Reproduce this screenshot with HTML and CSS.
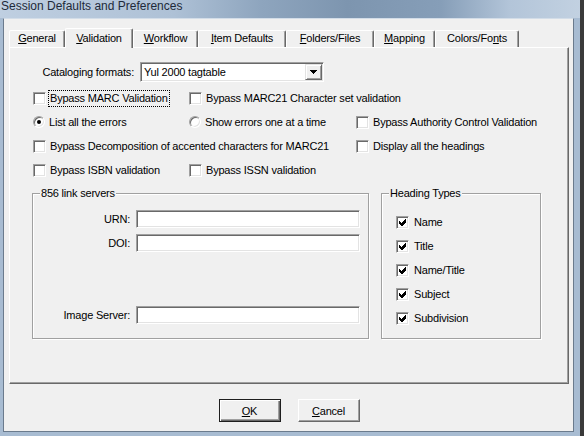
FILE: index.html
```html
<!DOCTYPE html>
<html lang="en">
<head>
    <meta charset="UTF-8">
    <title>Session Defaults and Preferences</title>
    <link rel="stylesheet" href="styles.css">
</head>
<body>
    <div class="window">
        <div class="titlebar">Session Defaults and Preferences</div>

        <div class="client">
            <div class="tabs">
                <div class="tab"><u>G</u>eneral</div>
                <div class="tab active"><u>V</u>alidation</div>
                <div class="tab"><u>W</u>orkflow</div>
                <div class="tab"><u>I</u>tem Defaults</div>
                <div class="tab"><u>F</u>olders/Files</div>
                <div class="tab"><u>M</u>apping</div>
                <div class="tab">Colors/Fo<u>n</u>ts</div>
            </div>

            <div class="pane">
                <div class="format-row">
                    <span class="format-label">Cataloging formats:</span>
                    <div class="combo">
                        <span class="combo-text">Yul 2000 tagtable</span>
                        <span class="combo-btn">
                            <svg width="7" height="4" viewBox="0 0 7 4" shape-rendering="crispEdges"><polygon points="0,0 7,0 4,4 3,4"/></svg>
                        </span>
                    </div>
                </div>

                <div class="options">
                    <label class="opt"><span class="check"></span><span class="focus">Bypass MARC Validation</span></label>
                    <label class="opt wide"><span class="check"></span>Bypass MARC21 Character set validation</label>

                    <label class="opt"><span class="radio on"></span>List all the errors</label>
                    <label class="opt"><span class="radio"></span>Show errors one at a time</label>
                    <label class="opt"><span class="check"></span>Bypass Authority Control Validation</label>

                    <label class="opt wide"><span class="check"></span>Bypass Decomposition of accented characters for MARC21</label>
                    <label class="opt"><span class="check"></span>Display all the headings</label>

                    <label class="opt"><span class="check"></span>Bypass ISBN validation</label>
                    <label class="opt"><span class="check"></span>Bypass ISSN validation</label>
                </div>

                <div class="groups">
                    <div class="group links">
                        <span class="caption">856 link servers</span>
                        <div class="fields">
                            <span class="field-label">URN:</span>
                            <div class="field"></div>
                            <span class="field-label">DOI:</span>
                            <div class="field"></div>
                            <span class="field-label far">Image Server:</span>
                            <div class="field far"></div>
                        </div>
                    </div>

                    <div class="group headings">
                        <span class="caption">Heading Types</span>
                        <div class="checks">
                            <label class="opt"><span class="check"><svg class="tick" width="11" height="11" viewBox="0 0 11 11" shape-rendering="crispEdges"><polygon points="2,4 4,6 8,2 9,2 9,5 5,9 4,9 2,7"/></svg></span>Name</label>
                            <label class="opt"><span class="check"><svg class="tick" width="11" height="11" viewBox="0 0 11 11" shape-rendering="crispEdges"><polygon points="2,4 4,6 8,2 9,2 9,5 5,9 4,9 2,7"/></svg></span>Title</label>
                            <label class="opt"><span class="check"><svg class="tick" width="11" height="11" viewBox="0 0 11 11" shape-rendering="crispEdges"><polygon points="2,4 4,6 8,2 9,2 9,5 5,9 4,9 2,7"/></svg></span>Name/Title</label>
                            <label class="opt"><span class="check"><svg class="tick" width="11" height="11" viewBox="0 0 11 11" shape-rendering="crispEdges"><polygon points="2,4 4,6 8,2 9,2 9,5 5,9 4,9 2,7"/></svg></span>Subject</label>
                            <label class="opt"><span class="check"><svg class="tick" width="11" height="11" viewBox="0 0 11 11" shape-rendering="crispEdges"><polygon points="2,4 4,6 8,2 9,2 9,5 5,9 4,9 2,7"/></svg></span>Subdivision</label>
                        </div>
                    </div>
                </div>
            </div>

            <div class="buttons">
                <div class="btn default"><u>O</u>K</div>
                <div class="btn"><u>C</u>ancel</div>
            </div>
        </div>
    </div>
</body>
</html>
```

FILE: styles.css
```css
body {
    margin: 0;
    width: 584px;
    height: 436px;
    overflow: hidden;
    background-color: #3a3a3a;
    font-family: 'Liberation Sans', Arial, sans-serif;
    font-size: 11px;
    letter-spacing: -0.2px;
    color: #000;
}
.window {
    width: 580px;
    height: 436px;
    display: flex;
    flex-direction: column;
    background-color: #a8bcd2;
}
.titlebar {
    height: 18px;
    flex: none;
    padding-left: 1px;
    font-size: 12px;
    line-height: 12px;
    letter-spacing: 0;
    color: #1e2a3a;
    background: linear-gradient(90deg, #bfcfe1 0%, #aec1d6 30%, #8ea5be 45%, #7d95af 60%, #869eb8 76%, #b3c5d9 88%, #c2d1e1 100%);
}
.client {
    flex: 1;
    margin: 0 6px 4px 3px;
    padding: 9px 0 0 5px;
    border: 1px solid #6b7b8d;
    border-top-color: #d3dde8;
    background-color: #f0f0f0;
}

/* onglets */
.tabs {
    display: flex;
    align-items: flex-end;
    height: 19px;
}
.tab {
    height: 17px;
    box-sizing: border-box;
    border: 1px solid;
    border-bottom: 0;
    border-color: #fff #696969 #696969 #fff;
    border-radius: 2px 2px 0 0;
    box-shadow: inset -1px 0 #a0a0a0;
    text-align: center;
    line-height: 15px;
}
.tab:nth-child(1) { width: 56px; }
.tab:nth-child(2) { width: 68px; }
.tab:nth-child(3) { width: 65px; }
.tab:nth-child(4) { width: 88px; }
.tab:nth-child(5) { width: 88px; }
.tab:nth-child(6) { width: 61px; }
.tab:nth-child(7) { width: 84px; }
.tab.active {
    height: 20px;
    margin-bottom: -1px;
    padding-top: 2px;
    background-color: #f0f0f0;
    position: relative;
    z-index: 1;
}
.pane {
    width: 560px;
    height: 337px;
    box-sizing: border-box;
    border: 1px solid;
    border-color: #fff #696969 #696969 #fff;
    box-shadow: inset -1px -1px #a0a0a0;
}

/* format */
.format-row {
    display: flex;
    align-items: center;
    margin-top: 14px;
}
.format-label {
    width: 124px;
    margin-right: 6px;
    text-align: right;
}
.combo {
    width: 184px;
    height: 20px;
    box-sizing: border-box;
    display: flex;
    align-items: center;
    padding: 1px 1px 1px 3px;
    background-color: #fff;
    border: 1px solid;
    border-color: #a0a0a0 #fff #fff #a0a0a0;
    box-shadow: inset 1px 1px #696969, inset -1px -1px #e3e3e3;
}
.combo-text {
    flex: 1;
}
.combo-btn {
    width: 17px;
    height: 16px;
    box-sizing: border-box;
    display: flex;
    align-items: center;
    justify-content: center;
    background-color: #f0f0f0;
    border: 1px solid;
    border-color: #e3e3e3 #696969 #696969 #e3e3e3;
    box-shadow: inset 1px 1px #fff, inset -1px -1px #a0a0a0;
}
.combo-btn svg {
    display: block;
}

/* cases a cocher */
.options {
    display: grid;
    grid-template-columns: 156px 167px 1fr;
    grid-auto-rows: 24px;
    margin-top: 4px;
    padding-left: 23px;
}
.opt {
    display: flex;
    align-items: center;
    gap: 4px;
    white-space: nowrap;
}
.wide {
    grid-column: span 2;
}
.check {
    width: 13px;
    height: 13px;
    flex: none;
    box-sizing: border-box;
    background-color: #fff;
    border: 1px solid;
    border-color: #a0a0a0 #fff #fff #a0a0a0;
    box-shadow: inset 1px 1px #696969, inset -1px -1px #e3e3e3;
}
.tick {
    display: block;
}
.radio {
    width: 12px;
    height: 12px;
    flex: none;
    box-sizing: border-box;
    display: flex;
    align-items: center;
    justify-content: center;
    border-radius: 50%;
    background-color: #fff;
    border: 1px solid;
    border-color: #a0a0a0 #fff #fff #a0a0a0;
    box-shadow: inset 1px 1px #696969, inset -1px -1px #e3e3e3;
}
.radio.on::after {
    content: "";
    width: 4px;
    height: 4px;
    border-radius: 50%;
    background-color: #000;
}
.focus {
    outline: 1px dotted #000;
    outline-offset: 1px;
    line-height: 13px;
}

/* groupes */
.groups {
    display: flex;
    gap: 12px;
    margin-top: 11px;
    padding-left: 22px;
}
.group {
    height: 146px;
    box-sizing: border-box;
    border: 1px solid #a0a0a0;
    box-shadow: 1px 1px 0 #fff, inset 1px 1px 0 #fff;
}
.links {
    width: 337px;
}
.headings {
    width: 160px;
}
.caption {
    display: block;
    width: fit-content;
    margin: -7px 0 0 7px;
    padding: 0 1px;
    line-height: 13px;
    background-color: #f0f0f0;
}
.fields {
    display: grid;
    grid-template-columns: 97px 224px;
    column-gap: 6px;
    row-gap: 6px;
    margin-top: 10px;
}
.field-label {
    text-align: right;
    line-height: 18px;
}
.field {
    height: 18px;
    box-sizing: border-box;
    background-color: #fff;
    border: 1px solid;
    border-color: #a0a0a0 #fff #fff #a0a0a0;
    box-shadow: inset 1px 1px #696969, inset -1px -1px #e3e3e3;
}
.far {
    margin-top: 48px;
}
.checks {
    display: grid;
    grid-auto-rows: 24px;
    margin-top: 10px;
    padding-left: 14px;
}
.checks .opt {
    gap: 5px;
}

/* boutons */
.buttons {
    width: 560px;
    display: flex;
    justify-content: center;
    gap: 17px;
    margin-top: 15px;
}
.btn {
    width: 62px;
    height: 23px;
    box-sizing: border-box;
    display: flex;
    align-items: center;
    justify-content: center;
    border: 1px solid;
    border-color: #fff #696969 #696969 #fff;
    box-shadow: inset -1px -1px #a0a0a0;
}
.btn.default {
    border-color: #1e1e1e;
    box-shadow: inset 1px 1px #fff, inset -1px -1px #696969, inset -2px -2px #a0a0a0;
}
```
